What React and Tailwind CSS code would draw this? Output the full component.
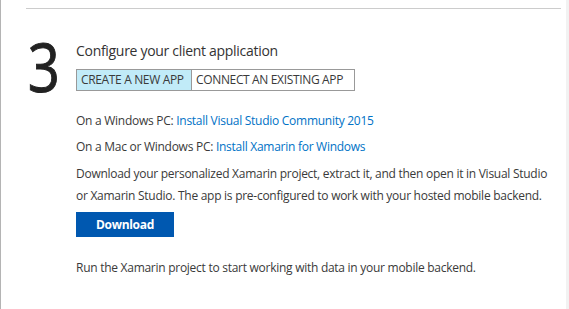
export default function App() {
  return (
    <div className="flex h-[309px] w-[569px] overflow-hidden bg-white font-['Open_Sans',sans-serif] text-[#3a3a3a]">
      {/* panel */}
      <div className="flex-1 border-l border-[#b4b4b4] pl-[25px] pr-[5px]">
        <hr className="mt-[8px] border-t border-[#cccccc]" />

        <div className="mt-[32px] flex">
          <div className="w-[50px] pl-[2px] text-[67px] font-normal leading-[50px] text-[#222] tracking-[-1px] scale-x-[0.84] origin-left [-webkit-text-stroke:1px_#222]">3</div>

          <div className="flex-1">
            <h2 className="text-[14px] leading-[20px] tracking-[-0.3px] text-[#333]">Configure your client application</h2>

            <div className="mt-[8px] flex text-[12px] leading-[20px] tracking-[-0.35px]">
              <button className="w-[116px] whitespace-nowrap border border-[#999] bg-[#c1ebf8] px-[4px] text-left uppercase">Create a new app</button>
              <button className="w-[163px] whitespace-nowrap border border-l-0 border-[#999] bg-white px-[4px] text-left uppercase">Connect an existing app</button>
            </div>

            <div className="mt-[19px] text-[12px] leading-[22px] tracking-[-0.27px]">
              <p>
                On a Windows PC: <a className="text-[#0072c6]">Install Visual Studio Community 2015</a>
              </p>
              <p className="mt-[4px]">
                On a Mac or Windows PC: <a className="text-[#0072c6]">Install Xamarin for Windows</a>
              </p>
              <p className="mt-[5px]">
                Download your personalized Xamarin project, extract it, and then open it in Visual Studio
                or Xamarin Studio. The app is pre-configured to work with your hosted mobile backend.
              </p>

              <button className="mt-[5px] block h-[25px] w-[98px] bg-[#0058b0] text-[12px] font-bold tracking-[-0.3px] text-white">
                Download
              </button>

              <p className="mt-[20px]">Run the Xamarin project to start working with data in your mobile backend.</p>
            </div>
          </div>
        </div>
      </div>
      {/* right edge strip */}
      <div className="w-[3px] bg-[#f2f2f2]" />
    </div>
  );
}
